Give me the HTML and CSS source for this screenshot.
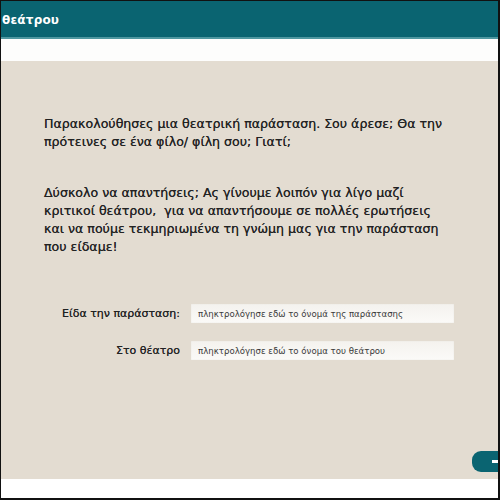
FILE: index.html
```html
<!DOCTYPE html>
<html lang="el">
<head>
<meta charset="utf-8">
<link rel="stylesheet" href="styles.css">
</head>
<body>
<div class="frame">
  <header class="topbar"><span class="title">θεάτρου</span></header>
  <div class="gap"></div>
  <main class="panel">
    <p class="intro">Παρακολούθησες μια θεατρική παράσταση. Σου άρεσε; Θα την πρότεινες σε ένα φίλο/ φίλη σου; Γιατί;</p>
    <p class="intro second">Δύσκολο να απαντήσεις; Ας γίνουμε λοιπόν για λίγο μαζί<br>κριτικοί θεάτρου,&nbsp; για να απαντήσουμε σε πολλές ερωτήσεις<br>και να πούμε τεκμηριωμένα τη γνώμη μας για την παράσταση<br>που είδαμε!</p>
    <div class="form">
      <label class="label">Είδα την παράσταση:</label>
      <div class="field">πληκτρολόγησε εδώ το όνομά της παράστασης</div>
      <label class="label">Στο θέατρο</label>
      <div class="field">πληκτρολόγησε εδώ το όνομα του θεάτρου</div>
    </div>
    <div class="nav"><div class="next"><span class="arrow"></span></div></div>
  </main>
  <div class="foot"></div>
</div>
</body>
</html>
```
FILE: styles.css
```css
html, body { margin: 0; padding: 0; background: #fff; }
.frame {
  width: 500px; height: 500px; box-sizing: border-box;
  border-top: 1px solid #111; border-left: 1px solid #111;
  border-right: 2px solid #111; border-bottom: 2px solid #111;
  display: flex; flex-direction: column; overflow: hidden;
  font-family: "DejaVu Sans", sans-serif;
}
.topbar {
  height: 36px; background: #0a6471; border-bottom: 2px solid #4f97a0;
  display: flex; align-items: center; flex: none;
}
.title { color: #fff; font-weight: bold; font-size: 12px; padding: 2px 0 0 1px; letter-spacing: 0.2px; }
.gap { height: 22px; flex: none; background: #fdfdfc; }
.panel {
  height: 418px; flex: none; background: #e3dcd1;
  padding: 54px 0 0 43px; box-sizing: border-box;
  display: flex; flex-direction: column; overflow: hidden;
}
.intro { margin: 0; font-size: 12.6px; line-height: 18px; color: #222; width: 420px; text-shadow: 0 0 0.6px #444; }
.second { margin-top: 33px; width: 440px; }
.form {
  margin-top: 48px; display: grid; grid-template-columns: 136px 263px;
  column-gap: 11px; row-gap: 18px; align-items: center;
}
.label { text-align: right; font-size: 11px; color: #222; text-shadow: 0 0 0.5px #444; }
.field {
  height: 19px; background: linear-gradient(#f4f2ee, #fbfaf8); font-size: 8.6px;
  color: #3a3a3a; display: flex; align-items: center; padding-left: 7px;
  box-shadow: inset 0 0 1px #d6d0c6; white-space: nowrap;
}
.nav { margin-top: auto; padding-bottom: 7px; display: flex; justify-content: flex-end; margin-right: -40px; }
.next {
  width: 66px; height: 21px; border-radius: 9px; background: #0a6471; position: relative;
}
.arrow { position: absolute; left: 20px; top: 9px; width: 10px; height: 3px; background: #fff; }
.foot { flex: 1; background: #fff; }
```
